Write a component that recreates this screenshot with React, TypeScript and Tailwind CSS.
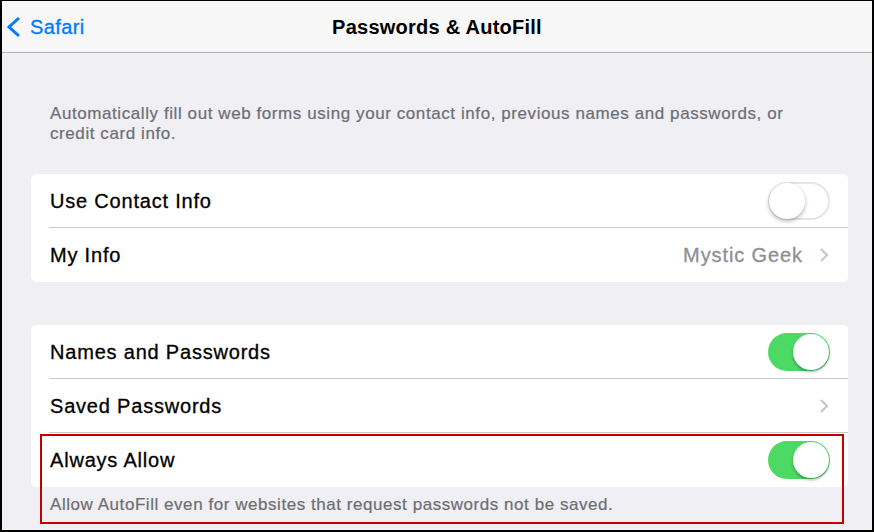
import React from "react";

function Toggle({ on }: { on: boolean }) {
  if (on) {
    return (
      <div className="relative w-[62px] h-[38px] rounded-full bg-[#4cd964]">
        <div className="absolute right-[1px] top-[1px] w-[36px] h-[36px] rounded-full bg-white shadow-[0_2px_3px_rgba(0,0,0,0.3)]" />
      </div>
    );
  }
  return (
    <div className="relative w-[62px] h-[38px] rounded-full bg-white border-2 border-[#e5e5ea]">
      <div className="absolute left-[-1px] top-[-1px] w-[36px] h-[36px] rounded-full bg-white shadow-[0_2px_4px_rgba(0,0,0,0.3)]" />
    </div>
  );
}

function Chevron() {
  return (
    <svg width="10" height="16" viewBox="0 0 10 16" className="ml-[16px] mr-[1px]">
      <path d="M2 2 L8 8 L2 14" fill="none" stroke="#c7c7cc" strokeWidth="2.2" />
    </svg>
  );
}

function Row({ label, children, sep }: { label: string; children?: React.ReactNode; sep?: boolean }) {
  return (
    <div className="relative h-[54px] flex items-center pl-[19px] pr-[18px]">
      <span className="flex-1 text-[20px] tracking-[0.8px] text-black [-webkit-text-stroke:0.3px_#000]">{label}</span>
      {children}
      {sep && <div className="absolute left-[18px] right-0 bottom-0 h-px bg-[#c8c7cc]" />}
    </div>
  );
}

export default function App() {
  return (
    <div
      className="w-[874px] h-[532px] border-t border-l-2 border-r-2 border-b-2 border-black bg-[#efeff4] flex flex-col overflow-hidden"
      style={{ fontFamily: '"Liberation Sans", Arial, sans-serif' }}
    >
      <div className="h-[52px] shrink-0 bg-[#f7f7f8] border-b border-[#b2b2b2] flex items-center relative">
        <div className="flex items-center pl-[2px]">
          <svg width="22" height="24" viewBox="0 0 22 24">
            <path d="M15 3 L5 12 L15 21" fill="none" stroke="#007aff" strokeWidth="3" />
          </svg>
          <span className="ml-[4px] text-[20px] tracking-[0.4px] text-[#007aff] [-webkit-text-stroke:0.3px_#007aff]">Safari</span>
        </div>
        <div className="absolute inset-0 flex items-center justify-center">
          <span className="text-[20px] font-bold tracking-[0.25px] text-black">Passwords &amp; AutoFill</span>
        </div>
      </div>

      <div className="relative flex-1 pl-[29px] pr-[24px]">
        <p className="mt-[51px] pl-[19px] pr-[40px] text-[17px] tracking-[0.58px] leading-[20px] text-[#6d6d72] [-webkit-text-stroke:0.2px_#6d6d72]">
          Automatically fill out web forms using your contact info, previous names and passwords, or credit card info.
        </p>

        <div className="mt-[30px] bg-white rounded-[5px]">
          <Row label="Use Contact Info" sep>
            <Toggle on={false} />
          </Row>
          <Row label="My Info">
            <span className="text-[20px] tracking-[0.9px] text-[#8e8e93] [-webkit-text-stroke:0.3px_#8e8e93]">Mystic Geek</span>
            <Chevron />
          </Row>
        </div>

        <div className="mt-[43px] bg-white rounded-[5px]">
          <Row label="Names and Passwords" sep>
            <Toggle on />
          </Row>
          <Row label="Saved Passwords" sep>
            <Chevron />
          </Row>
          <Row label="Always Allow">
            <Toggle on />
          </Row>
        </div>

        <p className="mt-[8px] pl-[19px] text-[17px] tracking-[0.55px] leading-[20px] text-[#6d6d72] [-webkit-text-stroke:0.2px_#6d6d72]">
          Allow AutoFill even for websites that request passwords not be saved.
        </p>

        <div className="absolute left-[38px] top-[381px] w-[804px] h-[90px] border-2 border-[#c00000]" />
      </div>
    </div>
  );
}
